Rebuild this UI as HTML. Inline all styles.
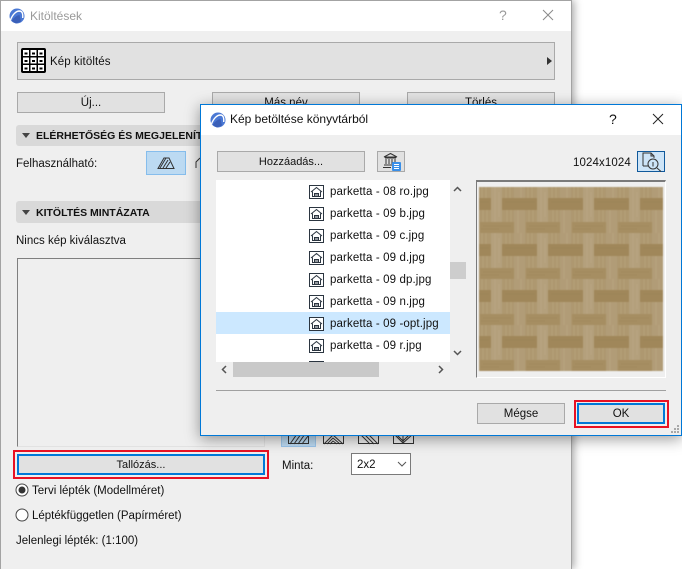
<!DOCTYPE html>
<html><head><meta charset="utf-8">
<style>
html,body{margin:0;padding:0;background:#fff}
body{width:682px;height:569px;position:relative;overflow:hidden;font:11.5px/16px "Liberation Sans",sans-serif;color:#111}
div,span,svg{position:absolute;box-sizing:border-box}
.t{white-space:nowrap;height:16px;margin-top:1px}
.btn{background:#e1e1e1;border:1px solid #a9a9a9;text-align:center;line-height:21px}
.sec{background:#d9d9d9;border-radius:3px;font-weight:bold;color:#111}
.tri{width:0;height:0;border-left:4px solid transparent;border-right:4px solid transparent;border-top:5px solid #444}
.row{left:0;width:234px;height:22px}
.row svg{left:93px;top:5px}
.row span{left:114px;top:4px;white-space:nowrap;letter-spacing:.12px}
</style></head><body>
<svg width="0" height="0" style="position:absolute"><defs>
<symbol id="h" viewBox="0 0 15 14"><rect x=".5" y=".5" width="14" height="13" fill="#fff" stroke="#2b3540"/><path d="M2 7L7.500 2.500 13 7M3.500 6.500V11.500H11.500V6.500M5.500 11.500V8.500H9.500V11.500M5.500 10H9.500" fill="none" stroke="#2b3540"/></symbol>
<symbol id="logo" viewBox="0 0 16 16"><circle cx="8" cy="8" r="7.500" fill="#4a78d4"/><path d="M1.500 12C3.500 6.500 7 3 10.500 3c3 .2 3.500 3 3.200 7" fill="none" stroke="#fff" stroke-width="1.400"/><path d="M2.500 13C5 9.500 7.500 7.500 10.500 7l1.500 6.500-5 2z" fill="#3a5fb8"/></symbol>
<pattern id="w" x="479" y="187" width="46" height="46" patternUnits="userSpaceOnUse">
<rect width="46" height="46" fill="#ae9870"/>
<path d="M3 0V11M7 0V11M27 0V11M31 0V11M4 23V35M8 23V35M28 23V35M32 23V35" stroke="#b9a47e" stroke-width="1" opacity=".6"/>
<rect x="23" y="11" width="23" height="12" fill="#a0875a"/><rect x="0" y="11" width="12" height="12" fill="#a0875a"/>
<rect x="1" y="35" width="34" height="11" fill="#a68e62"/>
<rect x="12" y="0" width="11" height="35" fill="#b4a07c"/>
<rect x="35" y="23" width="11" height="23" fill="#b19c77"/><rect x="35" y="0" width="11" height="11" fill="#b19c77"/>
<path d="M26 15H46M0 15H10M4 39H32M2 42H20" stroke="#927a52" stroke-width="1" opacity=".25"/>
<path d="M16 0V35M20 5V30M39 23V46M42 0V11" stroke="#c4b08f" stroke-width="1" opacity=".35"/>
</pattern>
</defs></svg>

<!-- back window -->
<div style="left:0;top:0;width:572px;height:569px;background:#efefef;border:1px solid #a3a3a3;border-bottom:none;box-shadow:2px 0 8px rgba(0,0,0,.35)"></div>
<div style="left:1px;top:1px;width:570px;height:30px;background:#fff"></div>
<svg style="left:9px;top:8px" width="16" height="16"><use href="#logo"/></svg>
<div class="t" style="left:30px;top:7px;font-size:12px;color:#9a9a9a">Kitöltések</div>
<div class="t" style="left:499px;top:6px;font-size:14px;color:#9a9a9a">?</div>
<svg style="left:542px;top:9px" width="12" height="12"><path d="M1 1L11 11M11 1L1 11" stroke="#8a8a8a" fill="none"/></svg>

<div class="btn" style="left:17px;top:42px;width:538px;height:38px"></div>
<svg style="left:21px;top:48px" width="25" height="25" viewBox="0 0 25 25"><rect width="25" height="25" rx="2" fill="#000"/>
<g fill="#fff"><rect x="2" y="2" width="6" height="6"/><rect x="9.500" y="2" width="6" height="6"/><rect x="17" y="2" width="6" height="6"/><rect x="2" y="9.500" width="6" height="6"/><rect x="9.500" y="9.500" width="6" height="6"/><rect x="17" y="9.500" width="6" height="6"/><rect x="2" y="17" width="6" height="6"/><rect x="9.500" y="17" width="6" height="6"/><rect x="17" y="17" width="6" height="6"/></g>
<g fill="#000"><rect x="3.500" y="4.500" width="3" height="2"/><rect x="11" y="4.500" width="3" height="2"/><rect x="18.500" y="4.500" width="3" height="2"/><rect x="3.500" y="12" width="3" height="2"/><rect x="11" y="12" width="3" height="2"/><rect x="18.500" y="12" width="3" height="2"/><rect x="3.500" y="19.500" width="3" height="2"/><rect x="11" y="19.500" width="3" height="2"/><rect x="18.500" y="19.500" width="3" height="2"/></g></svg>
<div class="t" style="left:50px;top:53px;letter-spacing:.1px">Kép kitöltés</div>
<div style="left:547px;top:57px;width:0;height:0;border-top:4px solid transparent;border-bottom:4px solid transparent;border-left:5px solid #333"></div>

<div class="btn" style="left:17px;top:92px;width:148px;height:21px">Új...</div>
<div class="btn" style="left:212px;top:92px;width:148px;height:21px">Más név</div>
<div class="btn" style="left:407px;top:92px;width:148px;height:21px">Törlés</div>

<div class="sec" style="left:16px;top:125px;width:190px;height:21px"></div>
<div class="tri" style="left:22px;top:133px"></div>
<div class="t" style="left:36px;top:127px;font-weight:bold;font-size:10.500px">ELÉRHETŐSÉG ÉS MEGJELENÍTÉS</div>
<div class="t" style="left:16px;top:155px">Felhasználható:</div>
<div style="left:146px;top:151px;width:40px;height:24px;background:#bcdaf2;border:1px solid #86bdec"></div>
<svg style="left:157px;top:157px" width="18" height="12" viewBox="0 0 18 12"><path d="M1 11.500L7 1H12L17 11.500Z" fill="none" stroke="#333"/><path d="M3 11L9 1M6 11L11 3M9 11L13 5" stroke="#333"/></svg>
<svg style="left:195px;top:157px" width="8" height="12"><path d="M1 11V5L5 1" fill="none" stroke="#333"/></svg>

<div class="sec" style="left:16px;top:201px;width:190px;height:22px"></div>
<div class="tri" style="left:22px;top:210px"></div>
<div class="t" style="left:36px;top:204px;font-weight:bold;font-size:10.500px">KITÖLTÉS MINTÁZATA</div>
<div class="t" style="left:16px;top:232px">Nincs kép kiválasztva</div>

<div style="left:17px;top:258px;width:248px;height:189px;border:1px solid #e2e2e2;border-top-color:#7f7f7f;border-left-color:#7f7f7f"></div>

<div style="left:13px;top:450px;width:256px;height:29px;border:2px solid #e81123"></div>
<div class="btn" style="left:17px;top:454px;width:248px;height:21px;border:2px solid #0078d7;line-height:19px;font-size:11px">Tallózás...</div>

<svg style="left:15px;top:483px" width="14" height="14"><circle cx="7" cy="7" r="6" fill="#fff" stroke="#444"/><circle cx="7" cy="7" r="3.500" fill="#333"/></svg>
<div class="t" style="left:32px;top:482px">Tervi lépték (Modellméret)</div>
<svg style="left:15px;top:508px" width="14" height="14"><circle cx="7" cy="7" r="6" fill="#fff" stroke="#444"/></svg>
<div class="t" style="left:32px;top:507px">Léptékfüggetlen (Papírméret)</div>
<div class="t" style="left:16px;top:532px">Jelenlegi lépték: (1:100)</div>

<div style="left:281px;top:430px;width:35px;height:17px;background:#bcdaf2;border:1px solid #9cc7ec"></div>
<svg style="left:288px;top:430px" width="127" height="15" viewBox="0 0 127 15"><g fill="none" stroke="#333"><rect x=".5" y="2" width="20" height="11.500"/><path d="M2 14L9 4M6 14L13 4M10 14L17 4M14 14L20 6"/><rect x="35.500" y="2" width="20" height="11.500"/><path d="M36 14L45 5L55 14M39 14L45 8L52 14M42 14L45 11L49 14"/><rect x="70.500" y="2" width="20" height="11.500"/><path d="M72 4L82 14M76 4L86 14M80 4L90 14"/><rect x="105.500" y="2" width="20" height="11.500"/><path d="M106 4L115 13L125 4M109 5L115 11M121 5L115 11M115 5V13"/></g></svg>
<div class="t" style="left:282px;top:457px">Minta:</div>
<div style="left:351px;top:453px;width:60px;height:22px;background:#fff;border:1px solid #7a7a7a"></div>
<div class="t" style="left:357px;top:456px">2x2</div>
<svg style="left:397px;top:461px" width="10" height="7"><path d="M1 1L5 5L9 1" fill="none" stroke="#555"/></svg>

<!-- front dialog -->
<div style="left:200px;top:104px;width:482px;height:332px;background:#efefef;border:1px solid #0078d7;box-shadow:0 3px 14px rgba(0,0,0,.4)"></div>
<div style="left:201px;top:105px;width:480px;height:30px;background:#fff"></div>
<svg style="left:210px;top:112px" width="16" height="16"><use href="#logo"/></svg>
<div class="t" style="left:230px;top:110px;font-size:12px">Kép betöltése könyvtárból</div>
<div class="t" style="left:609px;top:110px;font-size:14px">?</div>
<svg style="left:652px;top:113px" width="12" height="12"><path d="M1 1L11 11M11 1L1 11" stroke="#222" fill="none"/></svg>

<div class="btn" style="left:217px;top:151px;width:148px;height:21px;font-size:11px">Hozzáadás...</div>
<div class="btn" style="left:377px;top:151px;width:28px;height:21px"></div>
<svg style="left:382px;top:152px" width="20" height="20" viewBox="0 0 20 20"><path d="M2 5L8.500 1.500L15 5ZM3 6H14M4 7V12M7 7V12M10 7V12M13 7V12M2 13H11M1 15.500H9" fill="none" stroke="#333"/><rect x="10" y="10" width="9" height="9" rx="1" fill="#3a8fe8"/><path d="M12 12.500H17M12 14.500H17M12 16.500H17" stroke="#fff"/></svg>

<div class="t" style="left:573px;top:154px;letter-spacing:.1px">1024x1024</div>
<div style="left:637px;top:151px;width:28px;height:21px;background:#cde4f7;border:1px solid #10599b"></div>
<svg style="left:641px;top:152px" width="22" height="20" viewBox="0 0 22 20"><path d="M2 14V1H10L13 4V6M10 1V4H13M2 14H7" fill="none" stroke="#333"/><circle cx="12" cy="12" r="5" fill="none" stroke="#333"/><path d="M12 10V14.500M16 16L20 19.500" stroke="#333"/></svg>

<!-- list -->
<div style="left:216px;top:180px;width:234px;height:182px;background:#fff;overflow:hidden">
<div class="row" style="top:0"><svg width="15" height="14"><use href="#h"/></svg><span>parketta - 08 ro.jpg</span></div>
<div class="row" style="top:22px"><svg width="15" height="14"><use href="#h"/></svg><span>parketta - 09 b.jpg</span></div>
<div class="row" style="top:44px"><svg width="15" height="14"><use href="#h"/></svg><span>parketta - 09 c.jpg</span></div>
<div class="row" style="top:66px"><svg width="15" height="14"><use href="#h"/></svg><span>parketta - 09 d.jpg</span></div>
<div class="row" style="top:88px"><svg width="15" height="14"><use href="#h"/></svg><span>parketta - 09 dp.jpg</span></div>
<div class="row" style="top:110px"><svg width="15" height="14"><use href="#h"/></svg><span>parketta - 09 n.jpg</span></div>
<div class="row" style="top:132px;background:#cce8ff"><svg width="15" height="14"><use href="#h"/></svg><span>parketta - 09 -opt.jpg</span></div>
<div class="row" style="top:154px"><svg width="15" height="14"><use href="#h"/></svg><span>parketta - 09 r.jpg</span></div>
<div class="row" style="top:176px"><svg width="15" height="14"><use href="#h"/></svg></div>
</div>
<div style="left:450px;top:262px;width:16px;height:17px;background:#cdcdcd"></div>
<svg style="left:453px;top:186px" width="9" height="6"><path d="M1 5L4.500 1.500L8 5" fill="none" stroke="#555" stroke-width="1.500"/></svg>
<svg style="left:453px;top:350px" width="9" height="6"><path d="M1 1L4.500 4.500L8 1" fill="none" stroke="#555" stroke-width="1.500"/></svg>
<div style="left:233px;top:362px;width:146px;height:15px;background:#c9c9c9"></div>
<svg style="left:221px;top:365px" width="6" height="9"><path d="M5 1L1.500 4.500L5 8" fill="none" stroke="#555" stroke-width="1.500"/></svg>
<svg style="left:438px;top:365px" width="6" height="9"><path d="M1 1L4.500 4.500L1 8" fill="none" stroke="#555" stroke-width="1.500"/></svg>

<!-- preview -->
<div style="left:476px;top:180px;width:190px;height:198px;background:#efefef;border:1px solid #fff;border-top:2px solid #7a7a7a;border-left:1px solid #7a7a7a"></div>
<svg style="left:479px;top:187px;filter:blur(.5px)" width="184" height="184" viewBox="479 187 184 184"><rect x="479" y="187" width="184" height="184" fill="url(#w)"/></svg>

<div style="left:216px;top:390px;width:450px;height:1px;background:#a0a0a0"></div>
<div class="btn" style="left:477px;top:403px;width:88px;height:21px">Mégse</div>
<div style="left:574px;top:400px;width:95px;height:28px;border:2px solid #e81123"></div>
<div class="btn" style="left:577px;top:403px;width:88px;height:21px;border:2px solid #0078d7;line-height:19px">OK</div>
<svg style="left:670px;top:424px" width="10" height="10"><g fill="#a8a8a8"><rect x="7" y="1" width="2" height="2"/><rect x="4" y="4" width="2" height="2"/><rect x="7" y="4" width="2" height="2"/><rect x="1" y="7" width="2" height="2"/><rect x="4" y="7" width="2" height="2"/><rect x="7" y="7" width="2" height="2"/></g></svg>
</body></html>
